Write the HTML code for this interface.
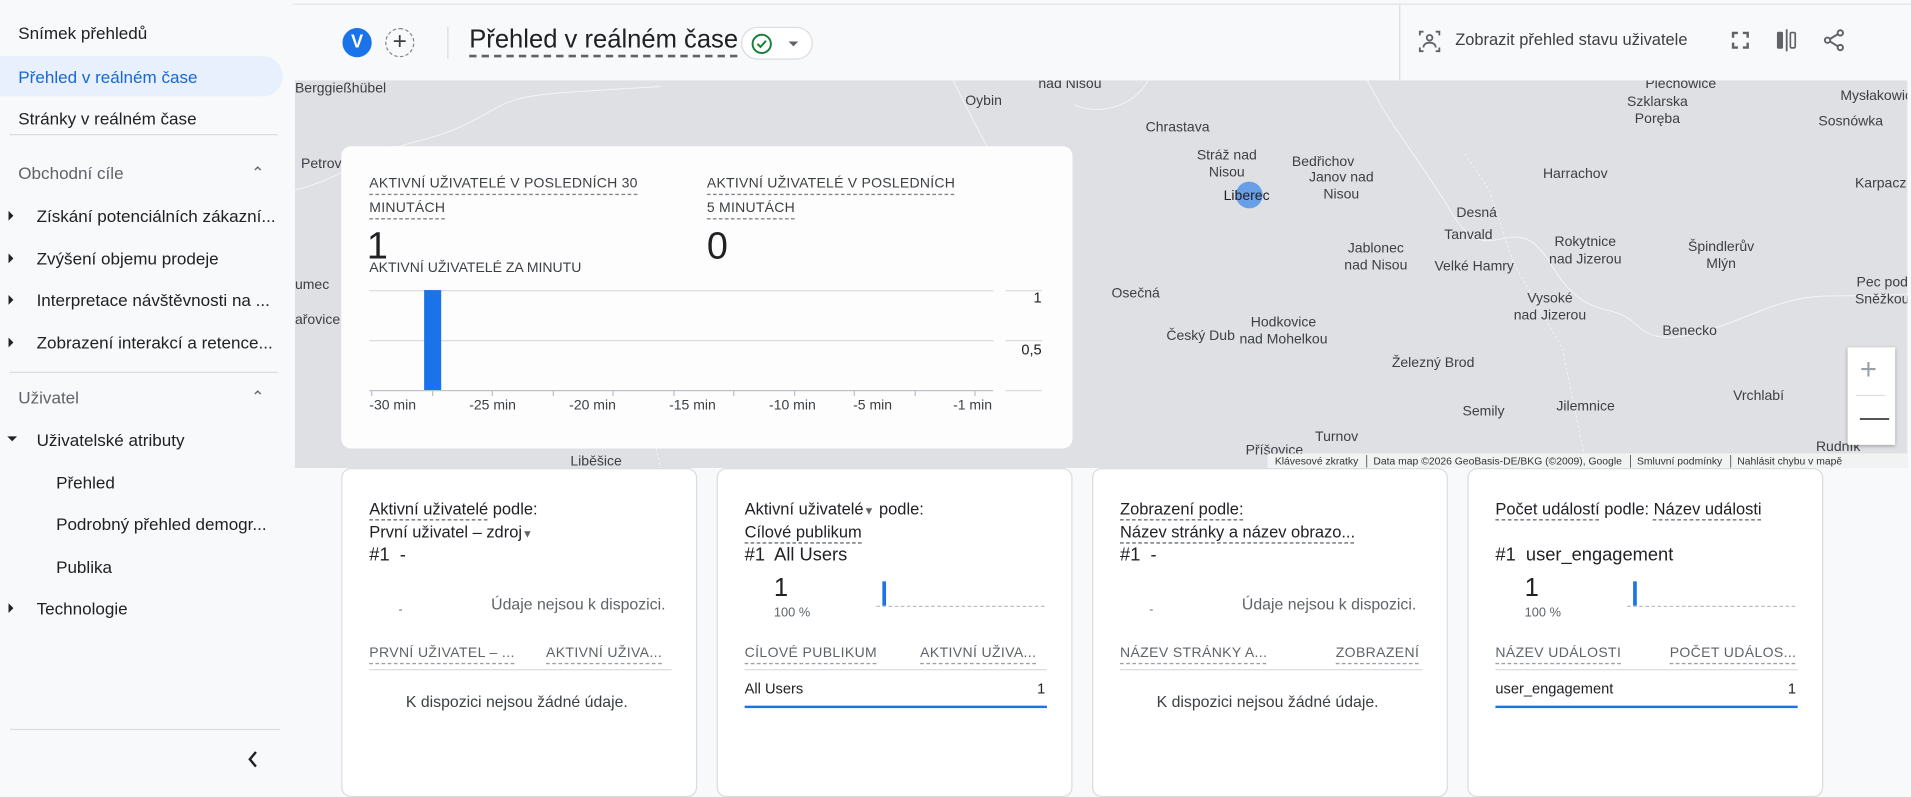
<!DOCTYPE html>
<html><head><meta charset="utf-8"><style>
*{box-sizing:border-box;margin:0;padding:0}
html,body{width:1911px;height:788px;overflow:hidden;background:#f8f9fa}
#w{position:absolute;left:0;top:0;width:1568px;height:647px;transform:scale(1.21875);transform-origin:0 0;font-family:"Liberation Sans","DejaVu Sans",sans-serif;color:#202124}
.a{position:absolute;white-space:nowrap}
.side{position:absolute;left:0;top:0;width:240px;height:647px;background:#f8f9fa}
.si{position:absolute;left:15px;font-size:14px;color:#202124}
.tri{position:absolute;left:7px;width:0;height:0;border-top:4px solid transparent;border-bottom:4px solid transparent;border-left:4px solid #202124}
.hr{position:absolute;left:8px;width:220px;height:1px;background:#dadce0}
.map{position:absolute;left:242px;top:66px;width:1323px;height:318px;background:#dfe0e3;overflow:hidden}
.ml{position:absolute;font-size:11.5px;color:#3c4043;text-align:center;line-height:14px;white-space:nowrap}
.ov{position:absolute;left:280px;top:120px;width:600px;height:248px;background:rgba(255,255,255,.93);border-radius:8px}
.hd{font-size:11.5px;color:#3c4043;letter-spacing:.2px;text-decoration:underline dashed #80868b;text-underline-offset:5px;line-height:20px}
.g{position:absolute;left:303px;width:512px;height:1px;background:#dadce0}
.xl{position:absolute;top:327px;font-size:11.5px;color:#3c4043}
.card{position:absolute;top:384px;width:292px;height:270px;background:#fff;border:1px solid #dadce0;border-radius:8px}
.ct{position:absolute;left:22px;font-size:13.5px;color:#202124}
.du{text-decoration:underline dashed #80868b;text-underline-offset:4px}
.th{position:absolute;top:145px;font-size:11.5px;color:#5f6368;letter-spacing:.3px;text-decoration:underline dashed #9aa0a6;text-underline-offset:5px}
.tl{position:absolute;left:22px;top:164px;width:248px;height:1px;background:#dadce0}
</style></head><body><div id="w">
<div class="a" style="left:0;top:3px;width:1568px;height:1px;background:#e3e3e3"></div>
<div class="side">
<div class="si" style="top:19px">Snímek přehledů</div>
<div style="position:absolute;left:0;top:46px;width:232px;height:33px;background:#e8f0fe;border-radius:0 17px 17px 0"></div>
<div class="si" style="top:55px;color:#1967d2">Přehled v reálném čase</div>
<div class="si" style="top:89px">Stránky v reálném čase</div>
<div class="hr" style="top:110px"></div>
<div class="si" style="top:134px;color:#5f6368">Obchodní cíle</div>
<div class="a" style="left:206px;top:134px;font-size:13px;color:#5f6368">&#8963;</div>
<div class="tri" style="top:173px"></div><div class="si" style="left:30px;top:169px">Získání potenciálních zákazní...</div>
<div class="tri" style="top:208px"></div><div class="si" style="left:30px;top:204px">Zvýšení objemu prodeje</div>
<div class="tri" style="top:242px"></div><div class="si" style="left:30px;top:238px">Interpretace návštěvnosti na ...</div>
<div class="tri" style="top:277px"></div><div class="si" style="left:30px;top:273px">Zobrazení interakcí a retence...</div>
<div class="hr" style="top:305px"></div>
<div class="si" style="top:318px;color:#5f6368">Uživatel</div>
<div class="a" style="left:206px;top:318px;font-size:13px;color:#5f6368">&#8963;</div>
<div style="position:absolute;left:6px;top:358px;border-left:4px solid transparent;border-right:4px solid transparent;border-top:4px solid #202124"></div>
<div class="si" style="left:30px;top:353px">Uživatelské atributy</div>
<div class="si" style="left:46px;top:388px">Přehled</div>
<div class="si" style="left:46px;top:422px">Podrobný přehled demogr...</div>
<div class="si" style="left:46px;top:457px">Publika</div>
<div class="tri" style="top:495px"></div><div class="si" style="left:30px;top:491px">Technologie</div>
<div class="hr" style="top:598px;width:222px"></div>
<svg class="a" style="left:200px;top:615px" width="16" height="16" viewBox="0 0 16 16"><path d="M10 2L5 8l5 6" fill="none" stroke="#202124" stroke-width="2"/></svg>
</div>
<!-- top bar -->
<div class="a" style="left:281px;top:23px;width:24px;height:24px;border-radius:50%;background:#1a73e8;color:#fff;font-size:15px;font-weight:bold;text-align:center;line-height:24px">V</div>
<div class="a" style="left:316px;top:23px;width:24px;height:24px;border-radius:50%;border:1px dashed #80868b;color:#3c4043;font-size:20px;text-align:center;line-height:21px">+</div>
<div class="a" style="left:367px;top:22px;width:1px;height:26px;background:#dadce0"></div>
<div class="a" style="left:385px;top:21px;font-size:21px;color:#202124;text-decoration:underline dashed #5f6368;text-underline-offset:6px">Přehled v reálném čase</div>
<div class="a" style="left:608px;top:22px;width:59px;height:27px;border:1px solid #dadce0;border-radius:14px;background:#fff"></div>
<svg class="a" style="left:615px;top:26px" width="20" height="20" viewBox="0 0 20 20"><circle cx="10" cy="10" r="7.5" fill="none" stroke="#188038" stroke-width="1.6"/><path d="M6.5 10l2.5 2.5 4.5-5" fill="none" stroke="#188038" stroke-width="1.6"/></svg>
<div class="a" style="left:647px;top:34px;border-left:4px solid transparent;border-right:4px solid transparent;border-top:4px solid #5f6368"></div>
<div class="a" style="left:1148px;top:4px;width:1px;height:62px;background:#dadce0"></div>
<svg class="a" style="left:1163px;top:24px" width="20" height="20" viewBox="0 0 20 20" fill="none" stroke="#5f6368" stroke-width="1.5"><path d="M2 5V2h3M15 2h3v3M2 15v3h3M15 18h3v-3"/><circle cx="10" cy="7" r="2.3"/><path d="M5 15c0-3 2.5-4 5-4s5 1 5 4"/></svg>
<div class="a" style="left:1194px;top:25px;font-size:13.5px;color:#3c4043">Zobrazit přehled stavu uživatele</div>
<svg class="a" style="left:1420px;top:25px" width="16" height="16" viewBox="0 0 16 16" fill="none" stroke="#5f6368" stroke-width="2"><path d="M2 6V2h4M10 2h4v4M2 10v4h4M10 14h4v-4"/></svg>
<svg class="a" style="left:1456px;top:23px" width="20" height="20" viewBox="0 0 20 20"><rect x="2" y="3" width="5" height="14" rx="1" fill="#5f6368"/><path d="M10 1v18" stroke="#5f6368" stroke-width="1.5"/><rect x="13" y="3.7" width="4" height="12.6" rx="1" fill="none" stroke="#5f6368" stroke-width="1.4"/></svg>
<svg class="a" style="left:1495px;top:23px" width="20" height="20" viewBox="0 0 20 20" fill="none" stroke="#5f6368" stroke-width="1.6"><circle cx="15" cy="4" r="2.2"/><circle cx="4.5" cy="10" r="2.2"/><circle cx="15" cy="16" r="2.2"/><path d="M6.5 9l6.5-4M6.5 11l6.5 4"/></svg>
<!-- map -->
<div class="map">
<svg style="position:absolute;left:0;top:0" width="1323" height="318" fill="none" stroke="#f4f4f6" stroke-width="0.8"><path d="M0 90 C40 80 60 60 100 50 S150 30 170 20 220 10 300 5"/><path d="M540 0 C560 40 570 60 590 90"/><path d="M700 0 C690 20 660 30 640 20"/><path d="M880 0 C900 40 920 60 950 110 S1000 100 1030 150 1080 180 1100 200 1150 210 1200 190 1260 180 1323 175"/><path d="M960 60 L980 90 L1000 150 L1040 220 L1060 318" stroke-dasharray="2 2"/><path d="M250 200 L280 230 L300 318" stroke-dasharray="2 2"/></svg>
<div class="ml" style="left:0;top:0">Berggießhübel</div>
<div class="ml" style="left:5px;top:62px">Petrov</div>
<div class="ml" style="left:0;top:161px">umec</div>
<div class="ml" style="left:0;top:190px">ařovice</div>
<div class="ml" style="left:550px;top:10px">Oybin</div>
<div class="ml" style="left:610px;top:-4px">nad Nisou</div>
<div class="ml" style="left:698px;top:32px">Chrastava</div>
<div class="ml" style="left:740px;top:55px">Stráž nad<br>Nisou</div>
<div class="a" style="left:772px;top:83px;width:22px;height:22px;border-radius:50%;background:rgba(26,115,232,.6)"></div>
<div class="ml" style="left:762px;top:88px;color:#202124">Liberec</div>
<div class="ml" style="left:818px;top:60px">Bedřichov<br>&nbsp;</div>
<div class="ml" style="left:832px;top:73px">Janov nad<br>Nisou</div>
<div class="ml" style="left:953px;top:102px">Desná</div>
<div class="ml" style="left:943px;top:120px">Tanvald</div>
<div class="ml" style="left:861px;top:131px">Jablonec<br>nad Nisou</div>
<div class="ml" style="left:935px;top:146px">Velké Hamry</div>
<div class="ml" style="left:1024px;top:70px">Harrachov</div>
<div class="ml" style="left:1029px;top:126px">Rokytnice<br>nad Jizerou</div>
<div class="ml" style="left:1143px;top:130px">Špindlerův<br>Mlýn</div>
<div class="ml" style="left:1093px;top:11px">Szklarska<br>Poręba</div>
<div class="ml" style="left:1108px;top:-4px">Piechowice</div>
<div class="ml" style="left:1250px;top:27px">Sosnówka</div>
<div class="ml" style="left:1268px;top:6px">Mysłakowice</div>
<div class="ml" style="left:1280px;top:78px">Karpacz</div>
<div class="ml" style="left:1280px;top:159px">Pec pod<br>Sněžkou</div>
<div class="ml" style="left:670px;top:168px">Osečná</div>
<div class="ml" style="left:1000px;top:172px">Vysoké<br>nad Jizerou</div>
<div class="ml" style="left:1122px;top:199px">Benecko</div>
<div class="ml" style="left:775px;top:192px">Hodkovice<br>nad Mohelkou</div>
<div class="ml" style="left:715px;top:203px">Český Dub</div>
<div class="ml" style="left:900px;top:225px">Železný Brod</div>
<div class="ml" style="left:1180px;top:252px">Vrchlabí</div>
<div class="ml" style="left:958px;top:265px">Semily</div>
<div class="ml" style="left:1035px;top:261px">Jilemnice</div>
<div class="ml" style="left:837px;top:286px">Turnov</div>
<div class="ml" style="left:780px;top:297px">Příšovice</div>
<div class="ml" style="left:226px;top:306px">Liběšice</div>
<div class="ml" style="left:1248px;top:294px">Rudník</div>
<div class="a" style="left:1274px;top:219px;width:39px;height:80px;background:#fff;box-shadow:0 1px 3px rgba(0,0,0,.3)"></div>
<div class="a" style="left:1284px;top:224px;font-size:24px;color:#9aa0a6;font-weight:300">+</div>
<div class="a" style="left:1281px;top:258px;width:24px;height:1px;background:#e0e0e0"></div>
<div class="a" style="left:1284px;top:263px;font-size:24px;color:#555">&#8212;</div>
<div class="a" style="left:798px;top:306px;width:525px;height:12px;background:rgba(245,245,245,.85);font-size:8.5px;color:#333;line-height:12px;padding-left:6px;word-spacing:0">Klávesové zkratky &nbsp;│ Data map ©2026 GeoBasis-DE/BKG (©2009), Google &nbsp;│ Smluvní podmínky &nbsp;│ Nahlásit chybu v mapě</div>
</div>
<!-- overlay -->
<div class="ov"></div>
<div class="a hd" style="left:303px;top:141px">AKTIVNÍ UŽIVATELÉ V POSLEDNÍCH 30</div>
<div class="a hd" style="left:303px;top:161px">MINUTÁCH</div>
<div class="a hd" style="left:580px;top:141px">AKTIVNÍ UŽIVATELÉ V POSLEDNÍCH</div>
<div class="a hd" style="left:580px;top:161px">5 MINUTÁCH</div>
<div class="a" style="left:301px;top:184px;font-size:31px;color:#202124">1</div>
<div class="a" style="left:580px;top:184px;font-size:31px;color:#202124">0</div>
<div class="a" style="left:303px;top:214px;font-size:11.5px;color:#3c4043">AKTIVNÍ UŽIVATELÉ ZA MINUTU</div>
<div class="g" style="top:238px"></div><div class="g" style="top:279px"></div><div class="g" style="top:320px;background:#bdc1c6"></div>
<div class="a" style="left:825px;top:238px;width:30px;height:1px;background:#dadce0"></div>
<div class="a" style="left:825px;top:279px;width:30px;height:1px;background:#dadce0"></div>
<div class="a" style="left:825px;top:320px;width:30px;height:1px;background:#dadce0"></div>
<div class="a" style="left:848px;top:237px;font-size:12px">1</div>
<div class="a" style="left:838px;top:280px;font-size:12px">0,5</div>
<div class="a" style="left:348px;top:238px;width:14px;height:82px;background:#1a73e8"></div>
<svg class="a" style="left:303px;top:320px" width="512" height="6"><path d="M2 0v5M52 0v5M101 0v5M151 0v5M200 0v5M250 0v5M299 0v5M349 0v5M398 0v5M448 0v5M497 0v5" stroke="#bdc1c6"/></svg>
<div class="xl" style="left:303px">-30 min</div><div class="xl" style="left:385px">-25 min</div><div class="xl" style="left:467px">-20 min</div><div class="xl" style="left:549px">-15 min</div><div class="xl" style="left:631px">-10 min</div><div class="xl" style="left:700px">-5 min</div><div class="xl" style="left:782px">-1 min</div>
<!-- cards -->
<div class="card" style="left:280px">
<div class="ct" style="top:25px"><span class="du">Aktivní uživatelé</span> podle:</div>
<div class="ct" style="top:44px">První uživatel – zdroj<span style="font-size:9px;color:#5f6368">▼</span></div>
<div class="ct" style="top:62px;font-size:15px">#1&nbsp; -</div>
<div class="a" style="left:122px;top:103px;font-size:13px;color:#5f6368">Údaje nejsou k dispozici.</div>
<div class="a" style="left:46px;top:110px;font-size:10px;color:#5f6368">-</div>
<div class="th" style="left:22px">PRVNÍ UŽIVATEL – ...</div><div class="th" style="left:167px">AKTIVNÍ UŽIVA...</div>
<div class="tl"></div>
<div class="a" style="left:52px;top:183px;font-size:13px;color:#3c4043">K dispozici nejsou žádné údaje.</div>
</div>
<div class="card" style="left:588px">
<div class="ct" style="top:25px">Aktivní uživatelé<span style="font-size:9px;color:#5f6368">▼</span> podle:</div>
<div class="ct du" style="top:44px">Cílové publikum</div>
<div class="ct" style="top:62px;font-size:15px">#1&nbsp; All Users</div>
<div class="a" style="left:46px;top:86px;font-size:21px">1</div>
<div class="a" style="left:46px;top:112px;font-size:10.5px;color:#5f6368">100 %</div>
<div class="a" style="left:135px;top:92px;width:3px;height:20px;background:#1a73e8"></div>
<div class="a" style="left:130px;top:112px;width:138px;border-top:1px dashed #bdc1c6"></div>
<div class="th" style="left:22px">CÍLOVÉ PUBLIKUM</div><div class="th" style="left:166px">AKTIVNÍ UŽIVA...</div>
<div class="tl"></div>
<div class="a" style="left:22px;top:173px;font-size:12px">All Users</div><div class="a" style="left:262px;top:173px;font-size:12px">1</div>
<div class="a" style="left:22px;top:194px;width:248px;height:2px;background:#1a73e8"></div>
</div>
<div class="card" style="left:896px">
<div class="ct du" style="top:25px">Zobrazení podle:</div>
<div class="ct du" style="top:44px">Název stránky a název obrazo...</div>
<div class="ct" style="top:62px;font-size:15px">#1&nbsp; -</div>
<div class="a" style="left:122px;top:103px;font-size:13px;color:#5f6368">Údaje nejsou k dispozici.</div>
<div class="a" style="left:46px;top:110px;font-size:10px;color:#5f6368">-</div>
<div class="th" style="left:22px">NÁZEV STRÁNKY A...</div><div class="th" style="left:199px">ZOBRAZENÍ</div>
<div class="tl"></div>
<div class="a" style="left:52px;top:183px;font-size:13px;color:#3c4043">K dispozici nejsou žádné údaje.</div>
</div>
<div class="card" style="left:1204px">
<div class="ct" style="top:25px"><span class="du">Počet událostí</span> podle: <span class="du">Název události</span></div>
<div class="ct" style="top:62px;font-size:15px">#1&nbsp; user_engagement</div>
<div class="a" style="left:46px;top:86px;font-size:21px">1</div>
<div class="a" style="left:46px;top:112px;font-size:10.5px;color:#5f6368">100 %</div>
<div class="a" style="left:135px;top:92px;width:3px;height:20px;background:#1a73e8"></div>
<div class="a" style="left:130px;top:112px;width:138px;border-top:1px dashed #bdc1c6"></div>
<div class="th" style="left:22px">NÁZEV UDÁLOSTI</div><div class="th" style="left:165px">POČET UDÁLOS...</div>
<div class="tl"></div>
<div class="a" style="left:22px;top:173px;font-size:12px">user_engagement</div><div class="a" style="left:262px;top:173px;font-size:12px">1</div>
<div class="a" style="left:22px;top:194px;width:248px;height:2px;background:#1a73e8"></div>
</div>
</div></body></html>
